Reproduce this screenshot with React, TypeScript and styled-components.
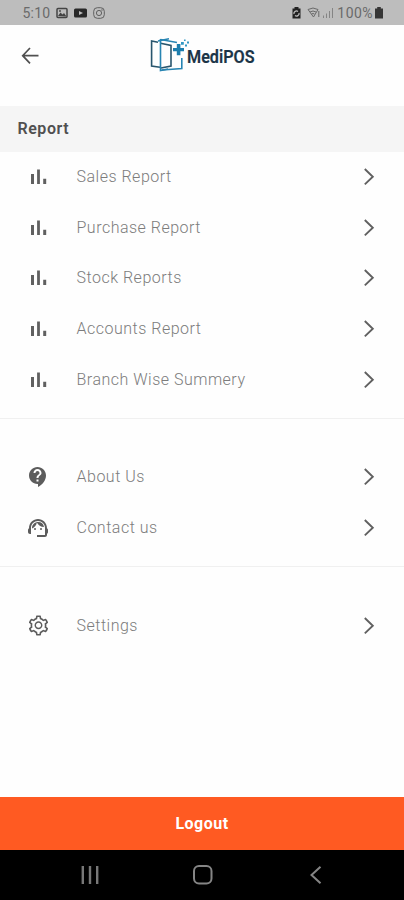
import React from "react";
import styled, { createGlobalStyle } from "styled-components";
import { MdContactSupport, MdSupportAgent } from "react-icons/md";
import { AiOutlineSetting } from "react-icons/ai";

const GlobalStyle = createGlobalStyle`
  * { box-sizing: border-box; }
  body { margin: 0; background: #fff; font-family: Roboto, "Liberation Sans", sans-serif; }
`;

const Screen = styled.div`
  width: 404px;
  height: 900px;
  display: flex;
  flex-direction: column;
  background: #fefefe;
  overflow: hidden;
`;

const StatusBar = styled.div`
  height: 25px;
  flex: none;
  display: flex;
  justify-content: space-between;
  align-items: center;
  padding: 1px 20px 0 22.5px;
  background: #bdbdbd;
  color: #6a6a6a;
`;

const StatusGroup = styled.div<{ $gap: number }>`
  display: flex;
  align-items: center;
  gap: ${(p) => p.$gap}px;
`;

const StatusText = styled.span<{ $spacing: number }>`
  font-size: 14px;
  line-height: 20px;
  letter-spacing: ${(p) => p.$spacing}px;
`;

const Header = styled.header`
  height: 81px;
  flex: none;
  display: flex;
  align-items: flex-start;
  padding: 11px 0 0 20px;
`;

const BackButton = styled.button`
  display: flex;
  width: 20px;
  height: 40px;
  padding: 0;
  border: 0;
  background: none;
  align-items: center;
`;

const Brand = styled.div`
  margin-left: 109px;
  height: 40px;
`;

const LogoSvg = styled.svg`
  display: block;
  overflow: visible;
`;

const SectionTitle = styled.h2`
  height: 45.5px;
  flex: none;
  margin: 0;
  padding: 0 17.5px;
  background: #f5f5f5;
  color: #505050;
  font-size: 16px;
  font-weight: 600;
  letter-spacing: 0.55px;
  line-height: 46px;
`;

const Menu = styled.nav<{ $spaced?: boolean; $divided?: boolean }>`
  flex: none;
  padding-top: ${(p) => (p.$spaced ? 33 : 0)}px;
  padding-bottom: ${(p) => (p.$divided ? 13 : 0)}px;
  border-bottom: ${(p) => (p.$divided ? "1px solid #f0f0f0" : "0")};
`;

const MenuRow = styled.div`
  height: 50.7px;
  display: grid;
  grid-template-columns: 49.5px 1fr 12px;
  align-items: center;
  padding: 0 29px 0 27px;
  color: #5c5c5c;
`;

const IconSlot = styled.span`
  display: flex;
  width: 22px;
  justify-content: center;

  svg {
    flex: none;
  }
`;

const Label = styled.span`
  font-size: 16px;
  font-weight: 300;
  line-height: 22px;
  letter-spacing: 0.5px;
  color: #7c7c7c;
  white-space: nowrap;
`;

const Spacer = styled.div`
  flex: 1;
`;

const LogoutButton = styled.button`
  height: 53px;
  flex: none;
  border: 0;
  padding: 0;
  background: #ff5a22;
  color: #fff;
  font: 700 16px/53px Roboto, "Liberation Sans", sans-serif;
  letter-spacing: 0.5px;
`;

const SystemNav = styled.div`
  height: 50px;
  flex: none;
  display: flex;
  justify-content: space-between;
  align-items: center;
  padding: 0 81px 0 80px;
  background: #000;
`;

const HomeIcon = styled.svg`
  margin-right: 3px;
`;

const BarsIcon = () => (
  <svg width="20" height="20" viewBox="0 0 20 20" fill="#606060">
    <path d="M3 7h3v10H3zM9.1 2.5h2.8V17H9.1zM15.2 11.7h3V17h-3z" />
  </svg>
);

const Chevron = () => (
  <svg width="12" height="18" viewBox="0 0 12 18" fill="none" stroke="#606060" strokeWidth="1.9">
    <path d="M1.8 1L9.8 8.7L1.8 16.4" />
  </svg>
);

const Logo = () => (
  <LogoSvg width="112" height="40" viewBox="0 0 112 40" fill="none">
    <g strokeWidth="1.6">
      <path d="M9 6.2L2.6 5V30L11 31.3" stroke="#28556d" />
      <path d="M11.5 7.3L22 9.5V30L12 32" stroke="#28556d" />
      <path d="M11.5 3V34.5L19 33" stroke="#2784b2" />
      <path d="M11.5 3.5L28 6.5" stroke="#2784b2" />
      <path d="M9 5L20 2.8M13 34L32.8 32.5V22" stroke="#2784b2" />
    </g>
    <path d="M27.8 8h3.6v4H35v3.2h-3.6v4h-3.6v-4H24V12h3.8z" fill="#1c7eae" />
    <path d="M32 6h2.8v2.8H32zM36 8.5h2v2h-2zM38 5.5h2v2h-2zM35 3.5h1.6v1.6H35z" fill="#3298c3" />
    <text
      x="38"
      y="27"
      fill="#1b3447"
      stroke="#1b3447"
      strokeWidth="0.2"
      fontFamily="Roboto, Liberation Sans, sans-serif"
      fontSize="18.5"
      fontWeight="600"
      textLength="67.5"
      lengthAdjust="spacingAndGlyphs"
    >
      MediPOS
    </text>
  </LogoSvg>
);

const reports = [
  "Sales Report",
  "Purchase Report",
  "Stock Reports",
  "Accounts Report",
  "Branch Wise Summery",
];

interface RowProps {
  icon: React.ReactNode;
  label: string;
}

const Row = ({ icon, label }: RowProps) => (
  <MenuRow>
    <IconSlot>{icon}</IconSlot>
    <Label>{label}</Label>
    <Chevron />
  </MenuRow>
);

export default function App() {
  return (
    <>
      <GlobalStyle />
      <Screen>
        <StatusBar>
          <StatusGroup $gap={6}>
            <StatusText $spacing={0.2}>5:10</StatusText>
            <svg width="12" height="12" viewBox="0 0 12 12">
              <rect x="1" y="1.5" width="10" height="9" rx="1" fill="none" stroke="#444" strokeWidth="1.5" />
              <path d="M2 9l2.5-3.5 2 2L8 6l2.5 3.5z" fill="#444" />
              <circle cx="4" cy="4" r="0.9" fill="#444" />
            </svg>
            <svg width="13" height="12" viewBox="0 0 13 12">
              <rect x="0" y="1.5" width="13" height="9" rx="1.5" fill="#292929" />
              <path d="M5 4l4 2-4 2z" fill="#bdbdbd" />
            </svg>
            <svg width="12" height="12" viewBox="0 0 12 12" fill="none" stroke="#606060">
              <rect x="0.7" y="0.7" width="10.6" height="10.6" rx="3.6" />
              <circle cx="6" cy="6" r="2.6" />
              <circle cx="9" cy="3" r="0.3" />
            </svg>
          </StatusGroup>
          <StatusGroup $gap={2}>
            <svg width="13" height="12" viewBox="0 0 13 12">
              <path d="M2.5 0h4v1.5H8.5V11.5H.5V1.5h2z" fill="#222" />
              <path d="M2 7a2.5 2.5 0 0 1 4-2.5M7 6a2.5 2.5 0 0 1-4 2.5" fill="none" stroke="#bdbdbd" strokeWidth="1.3" />
            </svg>
            <svg width="14" height="12" viewBox="0 0 14 12" fill="none" stroke="#6a6a6a">
              <path d="M1 2.5q5-3 10 0L6.5 10zM3 5q3-2 6 0M4.5 7q1.5-1 3 0M11.8 4v6" />
            </svg>
            <svg width="12" height="12" viewBox="0 0 12 12" fill="none" stroke="#858585">
              <path d="M.5 8.5V11M3.5 6.5V11M6.5 4V11M9.5 1V11" />
            </svg>
            <StatusText $spacing={0.45}>100%</StatusText>
            <svg width="9" height="12" viewBox="0 0 9 12" fill="#363636">
              <path d="M2.2 0h3.6v1.5H8V11.5H0V1.5h2.2z" />
            </svg>
          </StatusGroup>
        </StatusBar>

        <Header>
          <BackButton aria-label="Back">
            <svg width="20" height="20" viewBox="0 0 20 20" fill="none" stroke="#505050" strokeWidth="1.7">
              <path d="M18.5 9.7H3M10 2L2.7 9.7L10 17.4" />
            </svg>
          </BackButton>
          <Brand>
            <Logo />
          </Brand>
        </Header>

        <SectionTitle>Report</SectionTitle>
        <Menu $divided>
          {reports.map((label) => (
            <Row key={label} icon={<BarsIcon />} label={label} />
          ))}
        </Menu>
        <Menu $spaced $divided>
          <Row icon={<MdContactSupport size={24} />} label="About Us" />
          <Row icon={<MdSupportAgent size={24} />} label="Contact us" />
        </Menu>
        <Menu $spaced>
          <Row icon={<AiOutlineSetting size={23} />} label="Settings" />
        </Menu>
        <Spacer />

        <LogoutButton>Logout</LogoutButton>
        <SystemNav>
          <svg width="20" height="20" viewBox="0 0 20 20" fill="none" stroke="#777" strokeWidth="2.4">
            <path d="M2.8 1V19M10 1V19M17.2 1V19" />
          </svg>
          <HomeIcon width="22" height="22" viewBox="0 0 22 22" fill="none" stroke="#858585" strokeWidth="2">
            <rect x="2" y="2" width="17.5" height="17.5" rx="5" />
          </HomeIcon>
          <svg width="14" height="20" viewBox="0 0 14 20" fill="none" stroke="#858585" strokeWidth="2">
            <path d="M11.5 1.7L2.5 10L11.5 18.3" />
          </svg>
        </SystemNav>
      </Screen>
    </>
  );
}
